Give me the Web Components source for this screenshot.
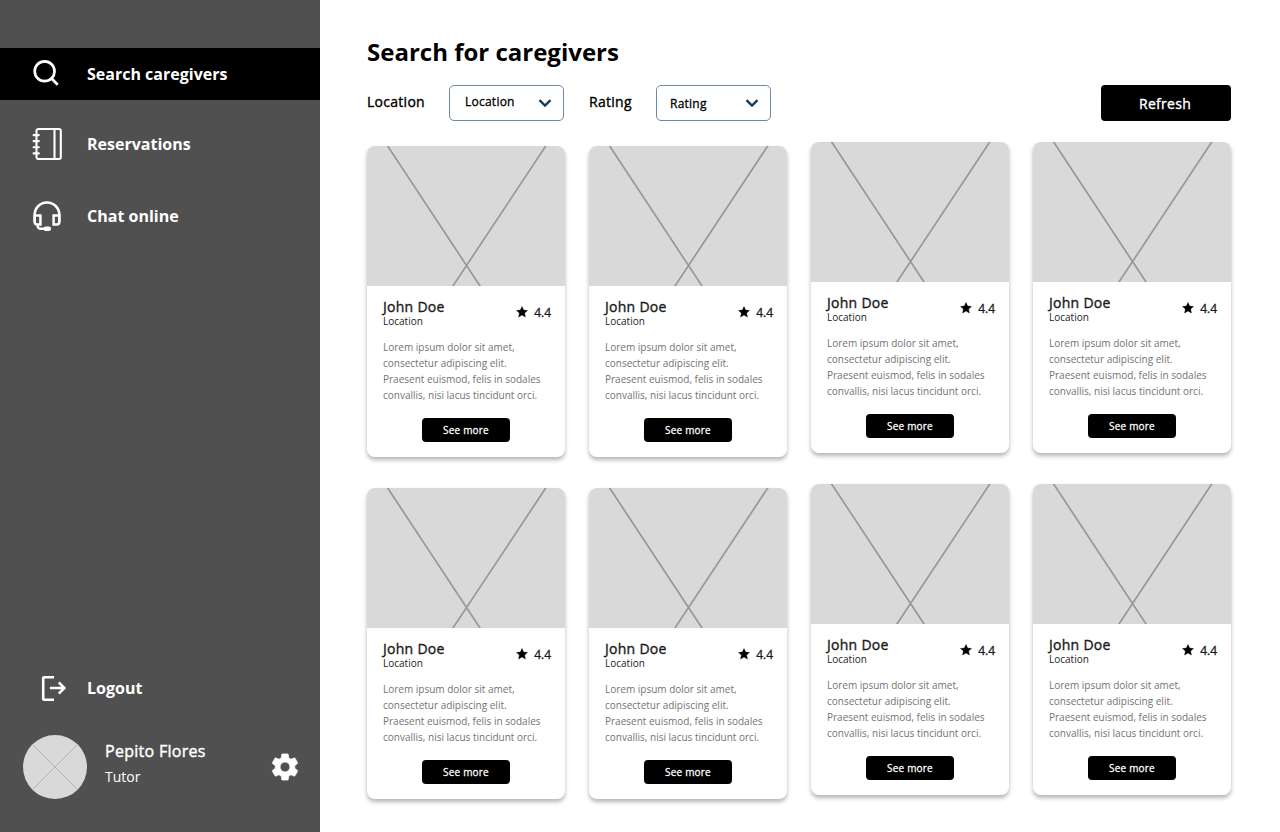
<!DOCTYPE html>
<html lang="en">
<head>
<meta charset="utf-8">
<title>Search for caregivers</title>
<style>
  body { margin: 0; font-family: "Open Sans", "Noto Sans", sans-serif; background: #fff; color: #000; }
</style>
</head>
<body>
<caregiver-app></caregiver-app>
<script>
function define(name, html, setup) {
  const template = document.createElement('template');
  // .medium approximates a 500 weight, which the installed family lacks.
  template.innerHTML = '<style>.medium { -webkit-text-stroke: .026em currentColor; letter-spacing: .02em; }</style>' + html;
  customElements.define(name, class extends HTMLElement {
    constructor() {
      super();
      this.attachShadow({ mode: 'open' }).appendChild(template.content.cloneNode(true));
    }
    connectedCallback() { if (setup) setup(this.shadowRoot, this); }
  });
}

define('nav-item', `
  <style>
    :host { display: flex; align-items: center; height: 52px; color: #fff; font-weight: 700; font-size: 16px; line-height: 22px; }
    :host([active]) { background: #000; }
    .icon { width: 87px; height: 52px; flex: none; }
    ::slotted(svg) { display: block; }
  </style>
  <div class="icon"><slot name="icon"></slot></div><span><slot></slot></span>`);

define('user-panel', `
  <style>
    :host { display: flex; align-items: center; height: 64px; padding: 0 20px 0 23px; color: #fff; }
    .avatar { width: 64px; height: 64px; margin-right: 18px; flex: none; }
    .who { flex: 1; padding-bottom: 8px; }
    .name { font-size: 16px; line-height: 22px; letter-spacing: .018em; }
    .role { font-size: 14px; line-height: 20px; margin-top: 5px; }
  </style>
  <svg class="avatar" viewBox="0 0 64 64"><circle cx="32" cy="32" r="32" fill="#d9d9d9"/><path d="M9.4 9.4 54.6 54.6M54.6 9.4 9.4 54.6" stroke="#b2b2b2"/></svg>
  <div class="who"><div class="name medium"><slot name="name"></slot></div><div class="role"><slot name="role"></slot></div></div>
  <svg width="30" height="30" viewBox="1 1 22 22"><path fill="#fff" stroke="#fff" stroke-width=".5" d="M19.14 12.94c.04-.3.06-.61.06-.94 0-.32-.02-.64-.07-.94l2.03-1.58a.49.49 0 0 0 .12-.61l-1.92-3.32a.488.488 0 0 0-.59-.22l-2.39.96c-.5-.38-1.03-.7-1.62-.94l-.36-2.54a.484.484 0 0 0-.48-.41h-3.84c-.24 0-.43.17-.47.41l-.36 2.54c-.59.24-1.13.57-1.62.94l-2.39-.96c-.22-.08-.47 0-.59.22L2.74 8.87c-.12.21-.08.47.12.61l2.03 1.58c-.05.3-.09.63-.09.94s.02.64.07.94l-2.03 1.58a.49.49 0 0 0-.12.61l1.92 3.32c.12.22.37.29.59.22l2.39-.96c.5.38 1.03.7 1.62.94l.36 2.54c.05.24.24.41.48.41h3.84c.24 0 .44-.17.47-.41l.36-2.54c.59-.24 1.13-.56 1.62-.94l2.39.96c.22.08.47 0 .59-.22l1.92-3.32c.12-.22.07-.47-.12-.61l-2.01-1.58zM12 15.6A3.61 3.61 0 0 1 8.4 12 3.61 3.61 0 0 1 12 8.4a3.61 3.61 0 0 1 3.6 3.6 3.61 3.61 0 0 1-3.6 3.6z"/></svg>`);

define('side-bar', `
  <style>
    :host { display: flex; flex-direction: column; box-sizing: border-box; width: 320px; height: 832px; padding: 48px 0 33px; background: #505050; flex: none; }
    nav { display: flex; flex-direction: column; }
    .second { margin-top: 18px; }
    .third { margin-top: 20px; }
    .logout { margin-top: auto; margin-bottom: 21px; }
  </style>
  <nav>
    <nav-item active>
      <svg slot="icon" width="87" height="52" viewBox="0 0 87 52" fill="none" stroke="#fff" stroke-width="2.7"><circle cx="44.6" cy="23.3" r="9.9"/><path d="m51.3 30.2 6.4 6.5"/></svg>
      Search caregivers</nav-item>
    <nav-item class="second">
      <svg slot="icon" width="87" height="52" viewBox="0 0 87 52" fill="none" stroke="#fff" stroke-width="2.1" stroke-linecap="round"><rect x="36.5" y="11" width="24.3" height="30" rx="2"/><path d="M54.5 11v30M33.6 17.1h5.2M33.6 23.1h5.2M33.6 29.2h5.2M33.6 35.4h5.2"/></svg>
      Reservations</nav-item>
    <nav-item class="third">
      <svg slot="icon" width="87" height="52" viewBox="0 0 87 52" fill="none" stroke="#fff" stroke-width="2.5"><path d="M34.7 32V24.5a12.3 12 0 0 1 24.6 0V32"/><path d="M34.7 25.5h5.7v9h-3.2a2.5 2.5 0 0 1-2.5-2.5zM59.3 25.5h-5.7v9h3.2a2.5 2.5 0 0 0 2.5-2.5zM37.6 34.5v1.2a3.1 3.1 0 0 0 3.1 3.1h4"/><rect x="44.5" y="37.4" width="5.6" height="2.8" rx="1.2" fill="#fff" stroke-width="1.8"/></svg>
      Chat online</nav-item>
  </nav>
  <nav-item class="logout">
    <svg slot="icon" width="87" height="52" viewBox="0 0 87 52" fill="none" stroke="#fff" stroke-width="2.6"><path d="M54 15.2H44.2a1 1 0 0 0-1 1v20.6a1 1 0 0 0 1 1H54M50 26h14M58.8 20.3l5.5 5.7-5.5 5.7"/></svg>
    Logout</nav-item>
  <user-panel><span slot="name">Pepito Flores</span><span slot="role">Tutor</span></user-panel>`);

define('select-box', `
  <style>
    :host { display: flex; box-sizing: border-box; width: 115px; height: 36px; border: 1px solid #6b8aa5; border-radius: 5px; align-items: center; justify-content: space-between; padding: 0 11px 0 15px; font-size: 12px; line-height: 16px; }
    :host([low]) { padding-left: 13px; }
    span { padding-bottom: 3px; }
    :host([low]) span { padding: 1px 0 0; }
  </style>
  <span class="medium"><slot></slot></span>
  <svg width="14" height="10" viewBox="0 0 14 10"><path d="m1.5 2.2 5.5 5.4 5.5-5.4" fill="none" stroke="#123e66" stroke-width="2.4"/></svg>`);

define('filter-bar', `
  <style>
    :host { display: flex; height: 36px; align-items: center; }
    label { font-size: 14px; line-height: 20px; padding-bottom: 3px; box-sizing: border-box; }
    .loc { width: 82px; } .rat { width: 67px; margin-left: 25px; }
    button { margin-left: auto; width: 130px; height: 36px; padding: 1px 2px 0 0; border: 0; border-radius: 4px; background: #000; color: #fff; font: 14px/20px "Open Sans", sans-serif; }
  </style>
  <label class="loc medium">Location</label><select-box>Location</select-box>
  <label class="rat medium">Rating</label><select-box low>Rating</select-box>
  <button class="medium">Refresh</button>`);

define('caregiver-card', `
  <style>
    :host { display: block; width: 198px; height: 311px; border-radius: 8px; background: #fff; box-shadow: 0 3px 4px rgba(0,0,0,.29); }
    .photo { display: block; background: #d9d9d9; border-radius: 8px 8px 0 0; }
    .body { padding: 11px 14px 0 16px; }
    header { display: flex; justify-content: space-between; align-items: flex-start; height: 31px; }
    .name { font-size: 14px; line-height: 20px; color: #1a1a1a; }
    .place { font-size: 10px; line-height: 14px; margin-top: -3px; color: #222; }
    .score { display: flex; align-items: center; font-size: 12px; line-height: 16px; color: #1a1a1a; margin-top: 8px; gap: 6px; }
    .score.medium { letter-spacing: 0; }
    .score svg { margin-top: -2px; }
    p { margin: 11px -10px 0 0; height: 64px; font-size: 10px; line-height: 16px; color: #737373; white-space: nowrap; }
    button { display: block; margin: 15px 0 0 39px; width: 88px; height: 24px; border: 0; border-radius: 4px; padding: 0; background: #000; color: #fff; font: 10px/14px "Open Sans", sans-serif; }
  </style>
  <svg class="photo" width="198" height="140" viewBox="0 0 198 140"><path d="M20 -1 113.7 141M179.4 -1 85.3 141" fill="none" stroke="#000" stroke-opacity=".3" stroke-width="1.7"/></svg>
  <div class="body">
    <header>
      <div><div class="name medium"><slot name="name"></slot></div><div class="place"><slot name="place"></slot></div></div>
      <div class="score medium"><svg width="12" height="12" viewBox="0 0 12 12"><path d="m6 .5 1.6 3.6 3.9.4-2.9 2.6.8 3.9L6 9l-3.4 2 .8-3.9L.5 4.5l3.9-.4z" stroke="#000" stroke-width=".4"/></svg><slot name="score"></slot></div>
    </header>
    <p>Lorem ipsum dolor sit amet,<br>consectetur adipiscing elit.<br>Praesent euismod, felis in sodales<br>convallis, nisi lacus tincidunt orci.</p>
    <button class="medium">See more</button>
  </div>`);

define('card-list', `
  <style>
    :host { display: flex; gap: 24px; align-items: flex-start; }
    .group { display: grid; grid-template-columns: 198px 198px; gap: 31px 24px; }
    .lower { padding-top: 4px; }
  </style>
  <div class="group lower"></div><div class="group"></div>`, root => {
    root.querySelectorAll('.group').forEach(group => {
      group.innerHTML = '<caregiver-card><span slot="name">John Doe</span><span slot="place">Location</span><span slot="score">4.4</span></caregiver-card>'.repeat(4);
    });
  });

define('caregiver-app', `
  <style>
    :host { display: flex; width: 1280px; height: 832px; overflow: hidden; }
    main { box-sizing: border-box; width: 960px; padding: 36px 49px 0 47px; }
    h1 { margin: 0 0 17px; font-size: 24px; line-height: 32px; font-weight: 700; }
    card-list { margin-top: 21px; }
  </style>
  <side-bar></side-bar>
  <main><h1>Search for caregivers</h1><filter-bar></filter-bar><card-list></card-list></main>`);
</script>
</body>
</html>
